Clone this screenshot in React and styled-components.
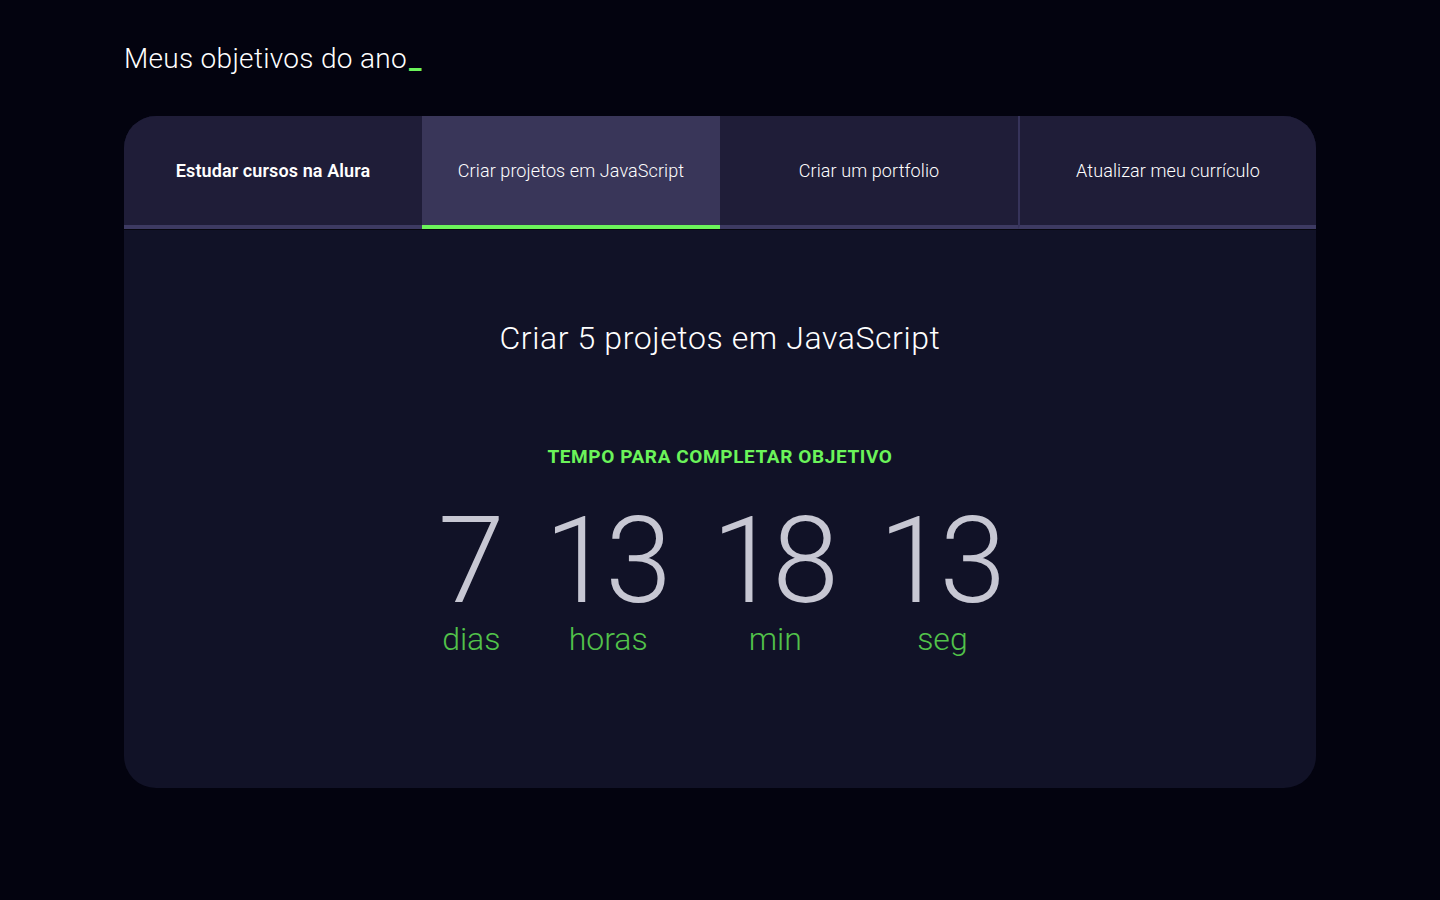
import React from "react";
import styled, { createGlobalStyle } from "styled-components";

const GlobalStyle = createGlobalStyle`
  html, body {
    margin: 0;
    padding: 0;
    background: #03030f;
    font-family: Roboto, "Liberation Sans", sans-serif;
  }
`;

const Page = styled.div`
  min-height: 900px;
  padding: 41px 124px 0;
  box-sizing: border-box;
`;

const Heading = styled.h1`
  margin: 0 0 39px;
  color: #ffffff;
  font-size: 28px;
  font-weight: 300;
  line-height: 36px;
  letter-spacing: 0.3px;
`;

const Cursor = styled.span`
  color: #6bf45a;
  font-weight: 700;
  margin-left: 2px;
`;

const Card = styled.section`
  border-radius: 32px;
  overflow: hidden;
  background: #111227;
  height: 672px;
  display: flex;
  flex-direction: column;
`;

const Tabs = styled.div`
  display: grid;
  grid-template-columns: repeat(4, 1fr);
  border-bottom: 1px solid #07070f;
`;

const Tab = styled.button`
  height: 113px;
  border: 0;
  border-bottom: 4px solid ${(p) => (p.$active ? "#6bf45a" : "#3d3a62")};
  border-left: ${(p) => (p.$divider ? "2px solid #36335a" : "0")};
  background: ${(p) => (p.$active ? "#393659" : "#1f1d38")};
  color: #ffffff;
  font-family: inherit;
  font-size: 18px;
  font-weight: ${(p) => (p.$bold ? 600 : 300)};
  letter-spacing: 0.1px;
  cursor: pointer;
  padding: 0;
`;

const Body = styled.div`
  flex: 1;
  display: flex;
  flex-direction: column;
  align-items: center;
  padding-top: 88px;
`;

const Goal = styled.h2`
  margin: 0;
  color: #ffffff;
  font-size: 32px;
  font-weight: 300;
  line-height: 40px;
  letter-spacing: 0.6px;
`;

const Caption = styled.p`
  margin: 87px 0 0;
  color: #6bf45a;
  font-size: 19px;
  font-weight: 700;
  line-height: 24px;
  letter-spacing: 0.6px;
`;

const Counter = styled.div`
  display: flex;
  gap: 40px;
  margin-top: 32px;
  margin-left: 4px;
`;

const Unit = styled.div`
  display: flex;
  flex-direction: column;
  align-items: center;
`;

const Number = styled.span`
  color: #c7c7d3;
  font-size: 120px;
  font-weight: 300;
  line-height: 120px;
  letter-spacing: -6px;
  padding-right: 6px;
`;

const Label = styled.span`
  color: #52c24a;
  font-size: 32px;
  font-weight: 300;
  line-height: 36px;
`;

const tabs = [
  "Estudar cursos na Alura",
  "Criar projetos em JavaScript",
  "Criar um portfolio",
  "Atualizar meu currículo",
];

const time = [
  { n: 7, l: "dias" },
  { n: 13, l: "horas" },
  { n: 18, l: "min" },
  { n: 13, l: "seg" },
];

export default function App() {
  const [active, setActive] = React.useState(1);
  return (
    <>
      <GlobalStyle />
      <Page>
        <Heading>
          Meus objetivos do ano<Cursor>_</Cursor>
        </Heading>
        <Card>
          <Tabs>
            {tabs.map((t, i) => (
              <Tab
                key={t}
                $active={active === i}
                $bold={i === 0}
                $divider={i === 3}
                onClick={() => setActive(i)}
              >
                {t}
              </Tab>
            ))}
          </Tabs>
          <Body>
            <Goal>Criar 5 projetos em JavaScript</Goal>
            <Caption>TEMPO PARA COMPLETAR OBJETIVO</Caption>
            <Counter>
              {time.map((t) => (
                <Unit key={t.l}>
                  <Number>{t.n}</Number>
                  <Label>{t.l}</Label>
                </Unit>
              ))}
            </Counter>
          </Body>
        </Card>
      </Page>
    </>
  );
}
